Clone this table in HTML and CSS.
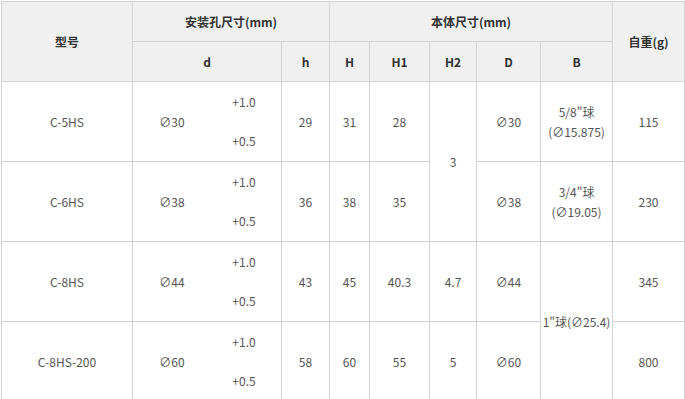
FILE: index.html
```html
<!DOCTYPE html>
<html lang="zh-CN">
<head>
    <meta charset="UTF-8">
    <title>尺寸表</title>
    <link rel="stylesheet" href="styles.css">
</head>
<body>
    <table class="spec">
        <colgroup>
            <col class="c-model">
            <col class="c-d">
            <col class="c-h">
            <col class="c-H">
            <col class="c-H1">
            <col class="c-H2">
            <col class="c-D">
            <col class="c-B">
            <col class="c-w">
        </colgroup>
        <thead>
            <tr>
                <th rowspan="2">型号</th>
                <th colspan="2">安装孔尺寸(mm)</th>
                <th colspan="5">本体尺寸(mm)</th>
                <th rowspan="2">自重(g)</th>
            </tr>
            <tr>
                <th>d</th>
                <th>h</th>
                <th>H</th>
                <th>H1</th>
                <th>H2</th>
                <th>D</th>
                <th>B</th>
            </tr>
        </thead>
        <tbody>
            <tr>
                <td>C-5HS</td>
                <td class="dcell">
                    <div class="dia">
                        <span class="dia-val">∅30</span>
                        <span class="tol">+1.0</span>
                        <span class="tol">+0.5</span>
                    </div>
                </td>
                <td>29</td>
                <td>31</td>
                <td>28</td>
                <td rowspan="2">3</td>
                <td>∅30</td>
                <td>5/8"球<br>(∅15.875)</td>
                <td>115</td>
            </tr>
            <tr>
                <td>C-6HS</td>
                <td class="dcell">
                    <div class="dia">
                        <span class="dia-val">∅38</span>
                        <span class="tol">+1.0</span>
                        <span class="tol">+0.5</span>
                    </div>
                </td>
                <td>36</td>
                <td>38</td>
                <td>35</td>
                <td>∅38</td>
                <td>3/4"球<br>(∅19.05)</td>
                <td>230</td>
            </tr>
            <tr>
                <td>C-8HS</td>
                <td class="dcell">
                    <div class="dia">
                        <span class="dia-val">∅44</span>
                        <span class="tol">+1.0</span>
                        <span class="tol">+0.5</span>
                    </div>
                </td>
                <td>43</td>
                <td>45</td>
                <td>40.3</td>
                <td>4.7</td>
                <td>∅44</td>
                <td rowspan="2">1"球(∅25.4)</td>
                <td>345</td>
            </tr>
            <tr>
                <td>C-8HS-200</td>
                <td class="dcell">
                    <div class="dia">
                        <span class="dia-val">∅60</span>
                        <span class="tol">+1.0</span>
                        <span class="tol">+0.5</span>
                    </div>
                </td>
                <td>58</td>
                <td>60</td>
                <td>55</td>
                <td>5</td>
                <td>∅60</td>
                <td>800</td>
            </tr>
        </tbody>
    </table>
</body>
</html>
```

FILE: styles.css
```css
html {
    overflow: hidden;
}
body {
    margin: 0;
    padding: 1px 0 0 1px;
    font-family: "Noto Sans CJK SC", "Noto Sans", sans-serif;
    font-size: 12px;
    color: #555;
    background-color: white;
}
.spec {
    border-collapse: collapse;
    table-layout: fixed;
    width: 684px;
}
.c-model { width: 131px; }
.c-d { width: 149px; }
.c-h { width: 48px; }
.c-H { width: 40px; }
.c-H1 { width: 60px; }
.c-H2 { width: 47px; }
.c-D { width: 64px; }
.c-B { width: 72px; }
.c-w { width: 72px; }
th, td {
    border: 1px solid #d2d2d2;
    text-align: center;
    vertical-align: middle;
    padding: 0;
    line-height: 20px;
}
th {
    background-color: #f0f0f0;
    color: #333;
    font-weight: bold;
    height: 39px;
}
td {
    height: 79px;
}
.dia {
    display: grid;
    grid-template-columns: 1fr 1fr;
    grid-template-rows: 39.5px 39.5px;
    align-items: center;
    justify-items: center;
}
.dia-val {
    grid-row: 1 / 3;
    padding-left: 4px;
}
```
